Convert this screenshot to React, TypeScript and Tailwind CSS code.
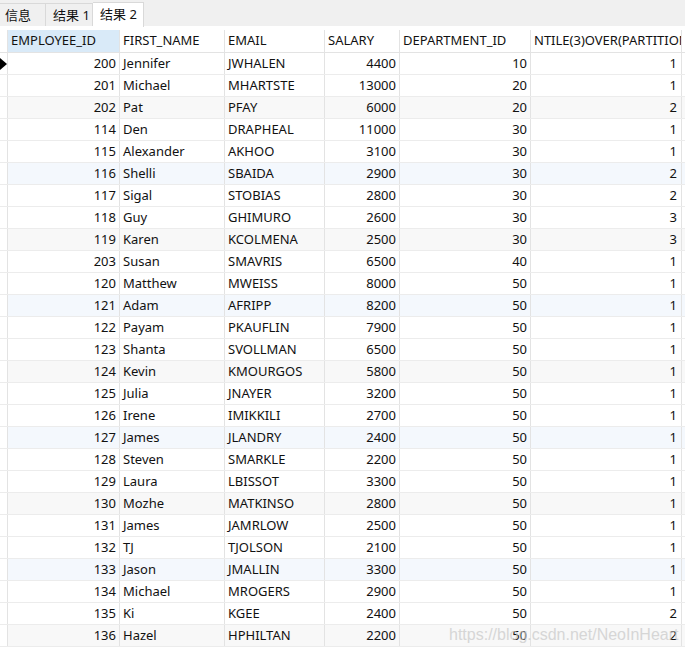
import React from "react";

const rows: [string, string, string, string, string, string][] = [
  ["200", "Jennifer", "JWHALEN", "4400", "10", "1"],
  ["201", "Michael", "MHARTSTE", "13000", "20", "1"],
  ["202", "Pat", "PFAY", "6000", "20", "2"],
  ["114", "Den", "DRAPHEAL", "11000", "30", "1"],
  ["115", "Alexander", "AKHOO", "3100", "30", "1"],
  ["116", "Shelli", "SBAIDA", "2900", "30", "2"],
  ["117", "Sigal", "STOBIAS", "2800", "30", "2"],
  ["118", "Guy", "GHIMURO", "2600", "30", "3"],
  ["119", "Karen", "KCOLMENA", "2500", "30", "3"],
  ["203", "Susan", "SMAVRIS", "6500", "40", "1"],
  ["120", "Matthew", "MWEISS", "8000", "50", "1"],
  ["121", "Adam", "AFRIPP", "8200", "50", "1"],
  ["122", "Payam", "PKAUFLIN", "7900", "50", "1"],
  ["123", "Shanta", "SVOLLMAN", "6500", "50", "1"],
  ["124", "Kevin", "KMOURGOS", "5800", "50", "1"],
  ["125", "Julia", "JNAYER", "3200", "50", "1"],
  ["126", "Irene", "IMIKKILI", "2700", "50", "1"],
  ["127", "James", "JLANDRY", "2400", "50", "1"],
  ["128", "Steven", "SMARKLE", "2200", "50", "1"],
  ["129", "Laura", "LBISSOT", "3300", "50", "1"],
  ["130", "Mozhe", "MATKINSO", "2800", "50", "1"],
  ["131", "James", "JAMRLOW", "2500", "50", "1"],
  ["132", "TJ", "TJOLSON", "2100", "50", "1"],
  ["133", "Jason", "JMALLIN", "3300", "50", "1"],
  ["134", "Michael", "MROGERS", "2900", "50", "1"],
  ["135", "Ki", "KGEE", "2400", "50", "2"],
  ["136", "Hazel", "HPHILTAN", "2200", "50", "2"],
];

const font = { fontFamily: '"Noto Sans", "Noto Sans CJK SC", sans-serif' };

export default function App() {
  return (
    <div
      className="relative w-[685px] h-[651px] overflow-hidden bg-white text-[13px] text-[#111]"
      style={font}
    >
      {/* tab bar */}
      <div className="h-[26px] bg-[#f0f0f0] flex items-end">
        <div className="h-[23px] w-[46px] border-t border-r border-[#d9d9d9] flex items-center pl-[5px] leading-none">
          信息
        </div>
        <div className="h-[23px] w-[47px] border-t border-r border-[#d9d9d9] flex items-center pl-[7px] leading-none">
          结果 1
        </div>
        <div className="h-[25px] w-[51px] bg-white border-t border-r border-[#d9d9d9] flex items-center pl-[7px] leading-none -mb-[1px] pb-[2px]">
          结果 2
        </div>
      </div>
      <div className="h-[4px]" />
      {/* header */}
      <div className="flex h-[23px] border-b border-[#e3e3e3]">
        <div className="w-[8px] border-r border-[#e3e3e3]" />
        <div className="w-[112px] bg-[#d9eaf8] border-r border-[#e3e3e3] flex items-center pl-[3px]">EMPLOYEE_ID</div>
        <div className="w-[105px] border-r border-[#e3e3e3] flex items-center pl-[3px]">FIRST_NAME</div>
        <div className="w-[100px] border-r border-[#e3e3e3] flex items-center pl-[3px]">EMAIL</div>
        <div className="w-[75px] border-r border-[#e3e3e3] flex items-center pl-[3px]">SALARY</div>
        <div className="w-[131px] border-r border-[#e3e3e3] flex items-center pl-[3px]">DEPARTMENT_ID</div>
        <div className="w-[151px] border-r border-[#e3e3e3] flex items-center pl-[3px] overflow-hidden whitespace-nowrap">
          NTILE(3)OVER(PARTITION BY DEPARTMENT_ID)
        </div>
      </div>
      {/* rows */}
      {rows.map((r, i) => {
        const bg = i % 6 === 5 ? "bg-[#f4f8fd]" : i % 6 === 2 ? "bg-[#f8f8f8]" : "bg-white";
        return (
          <div key={i} className={`flex h-[22px] border-b border-[#ececec] ${bg}`}>
            <div className="w-[8px] border-r border-[#e3e3e3] relative bg-white">
              {i === 0 && (
                <svg className="absolute left-0 top-[5px]" width="7" height="12" viewBox="0 0 7 12">
                  <polygon points="0,0 7,6 0,12" fill="#000" />
                </svg>
              )}
            </div>
            <div className="w-[112px] border-r border-[#e3e3e3] flex items-center justify-end pr-[3px]">{r[0]}</div>
            <div className="w-[105px] border-r border-[#e3e3e3] flex items-center pl-[3px]">{r[1]}</div>
            <div className="w-[100px] border-r border-[#e3e3e3] flex items-center pl-[3px]">{r[2]}</div>
            <div className="w-[75px] border-r border-[#e3e3e3] flex items-center justify-end pr-[3px]">{r[3]}</div>
            <div className="w-[131px] border-r border-[#e3e3e3] flex items-center justify-end pr-[3px]">{r[4]}</div>
            <div className="w-[151px] border-r border-[#e3e3e3] flex items-center justify-end pr-[4px]">{r[5]}</div>
          </div>
        );
      })}
      {/* watermark */}
      <div
        className="absolute left-[449px] top-[623px] text-[16px] text-[#c8c8c8] opacity-70 whitespace-nowrap pointer-events-none"
        style={{ fontFamily: '"Liberation Sans", Arial, sans-serif' }}
      >
        https://blog.csdn.net/NeoInHeart
      </div>
    </div>
  );
}
